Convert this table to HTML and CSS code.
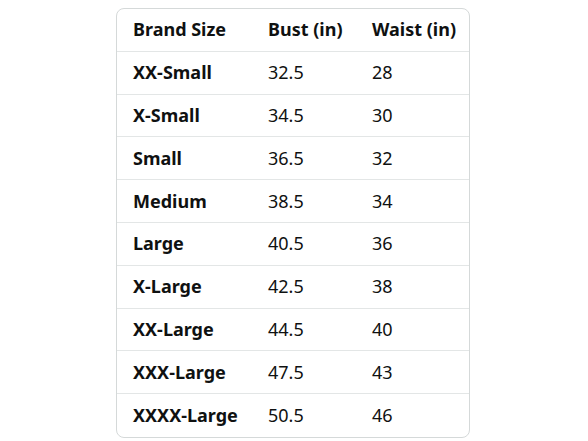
FILE: index.html
```html
<!DOCTYPE html>
<html>
<head>
<meta charset="utf-8">
<link rel="stylesheet" href="styles.css">
</head>
<body>
<div class="wrap">
  <table class="chart">
    <colgroup>
      <col class="c1"><col class="c2"><col class="c3">
    </colgroup>
    <thead>
      <tr><th>Brand Size</th><th>Bust (in)</th><th>Waist (in)</th></tr>
    </thead>
    <tbody>
      <tr><th>XX-Small</th><td>32.5</td><td>28</td></tr>
      <tr><th>X-Small</th><td>34.5</td><td>30</td></tr>
      <tr><th>Small</th><td>36.5</td><td>32</td></tr>
      <tr><th>Medium</th><td>38.5</td><td>34</td></tr>
      <tr><th>Large</th><td>40.5</td><td>36</td></tr>
      <tr><th>X-Large</th><td>42.5</td><td>38</td></tr>
      <tr><th>XX-Large</th><td>44.5</td><td>40</td></tr>
      <tr><th>XXX-Large</th><td>47.5</td><td>43</td></tr>
      <tr><th>XXXX-Large</th><td>50.5</td><td>46</td></tr>
    </tbody>
  </table>
</div>
</body>
</html>
```
FILE: styles.css
```css
html, body {
  margin: 0;
  padding: 0;
  background: #ffffff;
}
.wrap {
  display: flex;
  justify-content: center;
  padding-top: 8px;
  padding-right: 2px;
}
.chart {
  border-collapse: separate;
  border-spacing: 0;
  border: 1px solid #d5d9d9;
  border-radius: 8px;
  font-family: "Noto Sans", "Open Sans", sans-serif;
  font-size: 18px;
  color: #0f1111;
  width: 354px;
  table-layout: fixed;
}
.c1 { width: 135px; }
.c2 { width: 104px; }
.c3 { width: 113px; }
.chart th, .chart td {
  box-sizing: border-box;
  text-align: left;
  padding: 0 0 1px 16px;
  height: 42.8px;
  vertical-align: middle;
  border-bottom: 1px solid #e3e6e6;
  white-space: nowrap;
}
.chart th { font-weight: 700; }
.chart td { font-weight: 400; }
.chart tbody tr:last-child th,
.chart tbody tr:last-child td { border-bottom: none; }
```
